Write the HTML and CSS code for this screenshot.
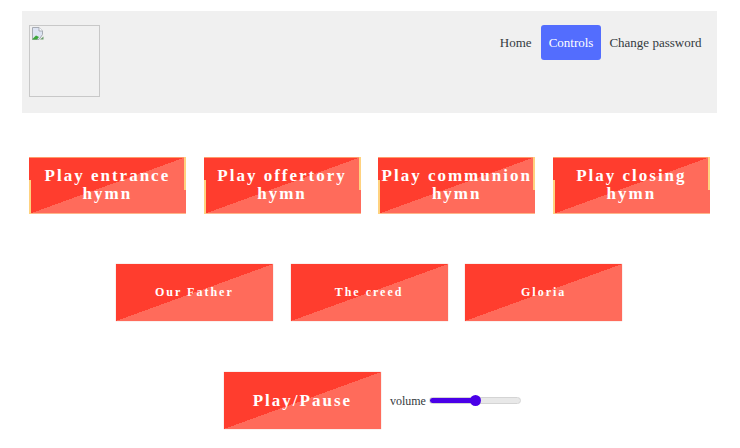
FILE: index.html
```html
<!DOCTYPE html>
<html lang="en">
<head>
<meta charset="utf-8">
<title>Controls</title>
<link rel="stylesheet" href="styles.css">
</head>
<body>
<header class="topbar">
  <div class="logo">
    <svg class="broken" width="13" height="13" viewBox="0 0 13 13">
      <path d="M1.500 .5H8L11.500 4V7.500L8 12.500H1.500Z" fill="#dde4f3" stroke="#a6abb3"/>
      <path d="M8 .5V4H11.500" fill="#fff" stroke="#a6abb3"/>
      <path d="M1 12.500L5 8.500L8 10L6 12.500Z" fill="#3aa63a"/>
      <path d="M9 12.500L12.500 9.500V12.500Z" fill="#6a9a6a"/>
    </svg>
  </div>
  <nav class="nav">
    <a class="nav-link home">Home</a>
    <a class="nav-link active">Controls</a>
    <a class="nav-link">Change password</a>
  </nav>
</header>
<section class="row row-hymns">
  <button class="btn btn-hymn">Play entrance hymn</button>
  <button class="btn btn-hymn">Play offertory hymn</button>
  <button class="btn btn-hymn">Play communion hymn</button>
  <button class="btn btn-hymn">Play closing hymn</button>
</section>
<section class="row row-prayers">
  <button class="btn btn-small">Our Father</button>
  <button class="btn btn-small">The creed</button>
  <button class="btn btn-small">Gloria</button>
</section>
<section class="row row-player">
  <button class="btn btn-play">Play/Pause</button>
  <label class="volume">volume
    <input class="slider" type="range" min="0" max="100" value="50">
  </label>
</section>
</body>
</html>
```
FILE: styles.css
```css
* { box-sizing: border-box; }
html, body { margin: 0; padding: 0; background: #fff; }
body {
  width: 740px;
  height: 448px;
  overflow: hidden;
  padding: 11px 23px 0 22px;
  font-family: "Liberation Serif", "Times New Roman", serif;
  color: #343a40;
}
.topbar {
  height: 102px;
  background: #f0f0f0;
  display: flex;
  justify-content: space-between;
  align-items: flex-start;
  padding: 14px 8px 14px 7px;
}
.logo {
  width: 71px;
  height: 72px;
  border: 1px solid #c8c8c8;
  line-height: 0;
  padding: 1px 0 0 1px;
}
.nav { display: flex; gap: .5px; }
.nav-link {
  height: 35px;
  padding: 0 7.500px;
  font-size: 13px;
  line-height: 35px;
  border-radius: 3px;
  color: #343a40;
}
.nav-link.home { padding-right: 8.500px; }
.nav-link.active { padding: 0 8px; background: #536dfe; color: #fff; }
.row { display: flex; gap: 17.670px; justify-content: flex-start; }
.row-hymns { margin-top: 44px; margin-left: 6.900px; }
.row-prayers { margin-top: 50px; margin-left: 93.900px; }
.row-player { margin-top: 51px; margin-left: 201.900px; align-items: center; gap: 9px; }
.btn {
  width: 157px;
  height: 57px;
  padding: 0;
  border: 0;
  border-radius: 0;
  color: #fff;
  font-family: "Liberation Serif", "Times New Roman", serif;
  font-weight: 700;
  background: linear-gradient(to bottom right, #ff3d2e 50%, #ff6b5b 50%);
  box-shadow: 0 0 1px rgba(220, 130, 110, .7);
}
.btn-hymn {
  position: relative;
  padding-bottom: 2px;
  font-size: 17px;
  line-height: 18px;
  letter-spacing: 2px;
  box-shadow: inset 0 -1px 0 #ffb58a, inset 0 1px 0 #ff9a6a;
}
.btn-small { font-size: 12px; letter-spacing: 2px; }
.btn-play { font-size: 17px; letter-spacing: 2px; }
.btn-hymn::before, .btn-hymn::after {
  content: "";
  position: absolute;
  width: 2px;
  background: #ffd27f;
}
.btn-hymn::before { left: 0; bottom: 0; height: 34px; }
.btn-hymn::after { right: 0; top: 0; height: 33px; }
.volume { display: flex; align-items: center; gap: 3.500px; padding-top: 2px; font-size: 12px; color: #343a40; }
.slider {
  -webkit-appearance: none;
  appearance: none;
  width: 91.500px;
  height: 7px;
  margin: -3px 0 0;
  border: 1px solid #d4d4d4;
  border-radius: 4px;
  background: linear-gradient(to right, #4a00e8 50%, #e8e8e8 50%);
}
.slider::-webkit-slider-thumb {
  -webkit-appearance: none;
  width: 11px;
  height: 11px;
  border-radius: 50%;
  background: #4a00e8;
}
```
